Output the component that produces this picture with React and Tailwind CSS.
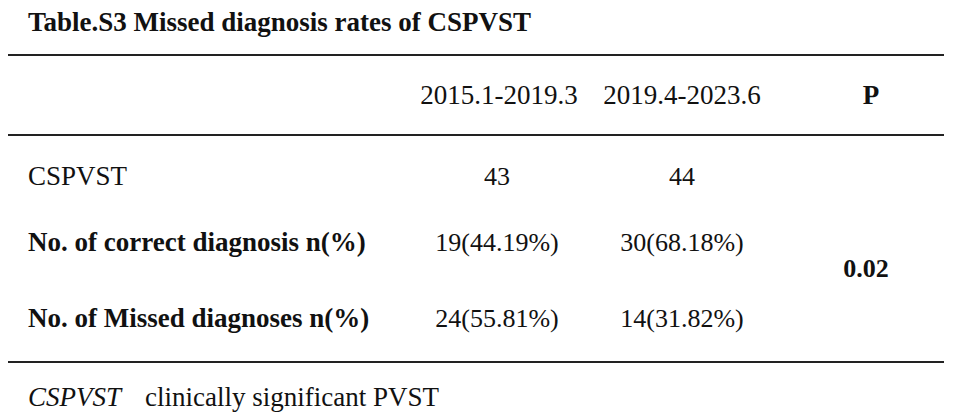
import React from 'react';

const serif = { fontFamily: '"Liberation Serif", "Times New Roman", serif' };

const rows = [
    { label: 'CSPVST', a: '43', b: '44', bold: false },
    { label: 'No. of correct diagnosis n(%)', a: '19(44.19%)', b: '30(68.18%)', bold: true },
    { label: 'No. of Missed diagnoses n(%)', a: '24(55.81%)', b: '14(31.82%)', bold: true },
];

const App = () => {
    return (
        <div className="w-[960px] h-[417px] bg-white text-[#111] overflow-hidden" style={serif}>
            <div className="pl-[28px] pt-[9px] h-[54px] text-[27px] leading-[27px] font-bold">
                Table.S3 Missed diagnosis rates of CSPVST
            </div>

            <div className="ml-[8px] w-[936px] border-t-2 border-b-2 border-[#222]">
                {/* header */}
                <div className="grid grid-cols-[392px_194px_176px_174px] h-[78px] items-center text-[27px] leading-[27px]">
                    <div />
                    <div className="text-center pl-[4px]">2015.1-2019.3</div>
                    <div className="text-center">2019.4-2023.6</div>
                    <div className="text-center pl-[28px] font-bold">P</div>
                </div>

                {/* body */}
                <div className="border-t-2 border-[#222] pt-[27px] pb-[29px] grid grid-cols-[392px_194px_176px_174px] grid-rows-[66px_76px_27px] leading-[27px]">
                    {rows.map((r, i) => (
                        <React.Fragment key={r.label}>
                            <div className={`pl-[20px] self-start text-[27px] ${r.bold ? 'font-bold' : ''}`}>{r.label}</div>
                            <div className="text-center self-start text-[26px]">{r.a}</div>
                            <div className="text-center self-start text-[26px]">{r.b}</div>
                            {i === 1 && (
                                <div className="row-span-2 self-center text-center pl-[18px] pb-[24px] text-[26px] font-bold">0.02</div>
                            )}
                            {i === 0 && <div />}
                        </React.Fragment>
                    ))}
                </div>
            </div>

            <div className="pl-[28px] mt-[21px] text-[27px] leading-[27px]">
                <span className="italic">CSPVST</span>
                <span className="ml-[24px]">clinically significant PVST</span>
            </div>
        </div>
    );
};

export default App;
